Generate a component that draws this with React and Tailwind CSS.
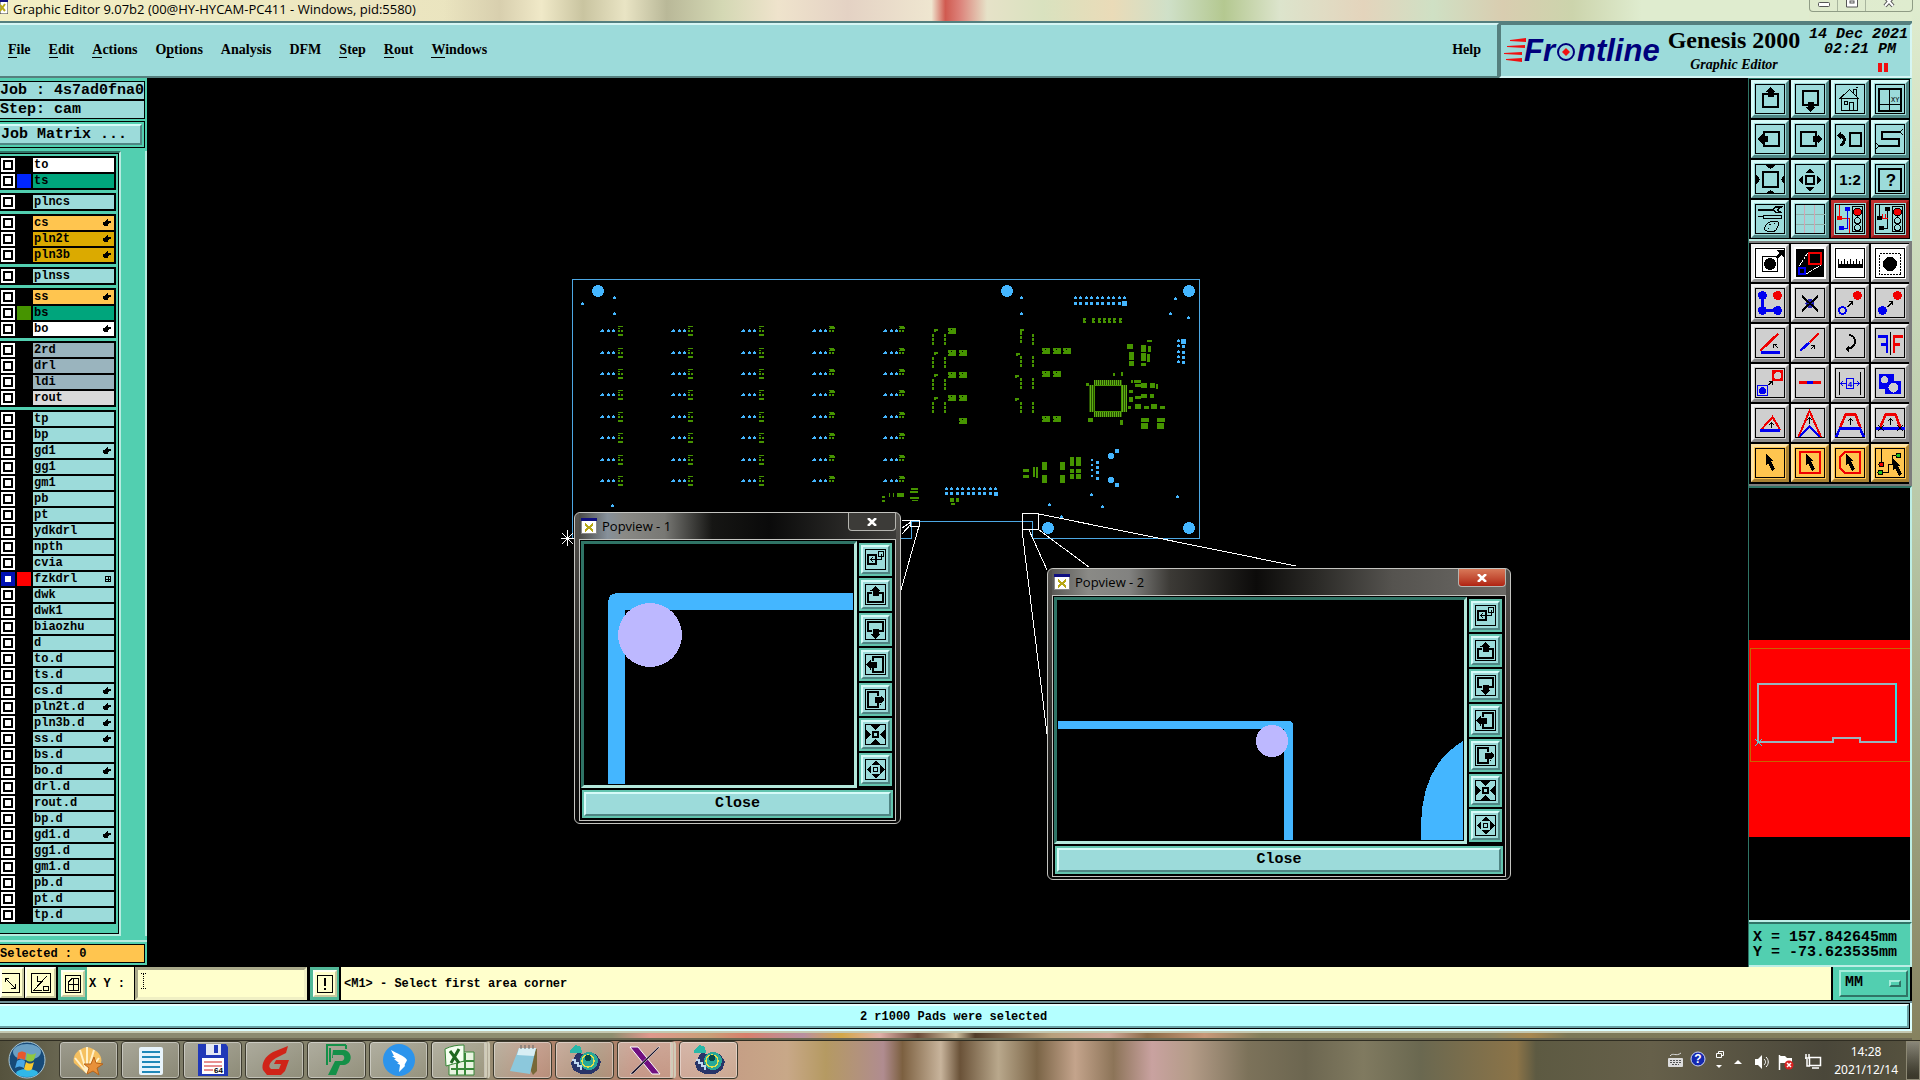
import React from 'react'

const raised = "border-t-[#d6fbf8] border-l-[#d6fbf8] border-b-[#4f8583] border-r-[#4f8583]";

// layer list, one array per block
const layerGroups = [
  [
    { name: "to", bg: "bg-white" },
    { name: "ts", bg: "bg-[#00a57c]", swatch: "bg-[#0026ff]" },
  ],
  [{ name: "plncs" }],
  [
    { name: "cs", bg: "bg-[#ffc54f]", hand: true },
    { name: "pln2t", bg: "bg-[#dbaa00]", hand: true },
    { name: "pln3b", bg: "bg-[#dbaa00]", hand: true },
  ],
  [{ name: "plnss" }],
  [
    { name: "ss", bg: "bg-[#ffc54f]", hand: true },
    { name: "bs", bg: "bg-[#00a57c]", swatch: "bg-[#469400]" },
    { name: "bo", bg: "bg-white", hand: true },
  ],
  [
    { name: "2rd", bg: "bg-[#9ab4be]" },
    { name: "drl", bg: "bg-[#9ab4be]" },
    { name: "ldi", bg: "bg-[#9ab4be]" },
    { name: "rout", bg: "bg-[#dadada]" },
  ],
  [
    { name: "tp" }, { name: "bp" }, { name: "gd1", hand: true }, { name: "gg1" },
    { name: "gm1" }, { name: "pb" }, { name: "pt" }, { name: "ydkdrl" },
    { name: "npth" }, { name: "cvia" },
    { name: "fzkdrl", swatch: "bg-[#ff0000]", active: true },
    { name: "dwk" }, { name: "dwk1" }, { name: "biaozhu" }, { name: "d" },
    { name: "to.d" }, { name: "ts.d" }, { name: "cs.d", hand: true },
    { name: "pln2t.d", hand: true }, { name: "pln3b.d", hand: true },
    { name: "ss.d", hand: true }, { name: "bs.d" }, { name: "bo.d", hand: true },
    { name: "drl.d" }, { name: "rout.d" }, { name: "bp.d" },
    { name: "gd1.d", hand: true }, { name: "gg1.d" }, { name: "gm1.d" },
    { name: "pb.d" }, { name: "pt.d" }, { name: "tp.d" },
  ],
];

const menus = [
  ["", "F", "ile"],
  ["", "E", "dit"],
  ["", "A", "ctions"],
  ["O", "p", "tions"],
  ["Analysis", "", ""],
  ["DFM", "", ""],
  ["", "S", "tep"],
  ["", "R", "out"],
  ["", "W", "indows"],
];

/* ---------- tool icons, all on a 38 x 38 grid ---------- */
const K = "#000";
const B = "#0000f0";
const R = "#f00000";

const SmallArrow = ({ d, head }) => (
  <g stroke={K} fill="none"><path d={d} /><path d={head} /></g>
);

const Lights = () => (
  <g stroke={K} fill="none">
    <rect x="21.5" y="6.5" width="10" height="25" />
    <circle cx="26.5" cy="12" r="4" fill={R} />
    <circle cx="26.5" cy="20.5" r="3" />
    <circle cx="26.5" cy="27.5" r="3" />
  </g>
);

const Cursor = ({ x = 0, y = 0 }) => (
  <path transform={`translate(${x} ${y})`} d="M15 10l8 7h-3l4 8-3 2-4-8-2 3z" fill={K} />
);

const viewTools = [
  { label: "Pan up", icon: <><rect x="12" y="14" width="15" height="13" stroke={K} strokeWidth="2" fill="none" /><path d="M19.5 7l5 5h-2v5h-6v-5h-2z" /></> },
  { label: "Pan down", icon: <><rect x="12" y="11" width="15" height="14" stroke={K} strokeWidth="2" fill="none" /><path d="M19.5 32l5-5h-2v-5h-6v5h-2z" /></> },
  { label: "Home", icon: <g stroke={K} fill="none"><path d="M9 18.5L18.5 9.5l9 9zM10.5 18.5v12h16v-12M18.5 30.5v-8h4v8M13.5 21.5h3v3h-3zM22.5 13v-4h3v7M24.5 7.5h2v-1" /></g> },
  { label: "Coordinates", icon: <><path d="M8 8.5h22v22H8z" stroke={K} strokeWidth="2" fill="none" /><path d="M18.5 8v22M8 24.5h22" stroke={K} /><text x="20" y="22" fontSize="7" fontFamily="Liberation Mono, monospace">XY</text></> },
  { label: "Pan left", icon: <><rect x="13" y="12" width="15" height="14" stroke={K} strokeWidth="2" fill="none" /><path d="M6.5 19l5-5v2h5v6h-5v2z" /></> },
  { label: "Pan right", icon: <><rect x="10" y="12" width="15" height="14" stroke={K} strokeWidth="2" fill="none" /><path d="M31.5 19l-5-5v2h-5v6h5v2z" /></> },
  { label: "Previous view", icon: <><rect x="19" y="13" width="11" height="13" stroke={K} strokeWidth="2" fill="none" /><path d="M6 15l4-4v3h2c4 2 4 10-1 12H9v-2c3-1 4-5 1-6v2z" /></> },
  { label: "Serpentine", icon: <><path d="M29 12H11v7h17v7H8" stroke={K} strokeWidth="2" fill="none" /><path d="M29 12l3-3M29 12l3 3M8 26l-3-3M8 26l-3 3" stroke={K} /></> },
  { label: "Zoom in", icon: <><rect x="12" y="12" width="15" height="15" stroke={K} strokeWidth="2" fill="none" /><path d="M14 5h11l-5.500 4zM14 34h11l-5.500-4zM5 14v11l4-5.500zM34 14v11l-4-5.500z" /></> },
  { label: "Zoom out", icon: <><rect x="15" y="16" width="8" height="8" stroke={K} strokeWidth="2" fill="none" /><path d="M14 13h10l-5-4zM14 27h10l-5 4zM12 15v10l-4-5zM26 15v10l4-5z" /></> },
  { label: "Zoom 1:2", icon: <text x="19" y="25" textAnchor="middle" fontSize="15" fontWeight="bold" fontFamily="Liberation Sans, sans-serif">1:2</text> },
  { label: "Query", icon: <><path d="M8 8.5h22v22H8z" stroke={K} strokeWidth="2" fill="none" /><text x="20" y="26" textAnchor="middle" fontSize="17" fontWeight="bold" fontFamily="Liberation Sans, sans-serif">?</text></> },
  { label: "Preferences", icon: <g stroke={K} fill="none"><path d="M7 9.5h15M7 10.5h15" /><path d="M30 7h-5l-3 2.500 3 3h5l-3-2v-1z" strokeWidth="1.5" /><path d="M7 16.5h5M12 15h18v3H12zM14 27c2-6 13-8 14-3 0 2-2 3-3 6-3 3-8 2-11 0-1-1 0-2 0-3zM18 24h2M23 23h1M17 28h1" /></g> },
  { label: "Grid", icon: <g fill="none"><path d="M4.5 24.5h29M4.5 14.5h29" stroke="#8fb0a8" /><path d="M13.5 5v28M23.5 5v28" stroke="#d3a5b5" /></g> },
  { label: "Net compare", red: true, icon: <><path d="M8.5 5v13h10v15" stroke={R} fill="none" /><path d="M16.5 9v19h-6" stroke={B} fill="none" /><circle cx="8.5" cy="18" r="2.5" fill={R} /><circle cx="16.5" cy="9" r="2.5" fill={B} /><circle cx="10.5" cy="28" r="2.5" fill={B} /><Lights /></> },
  { label: "Net errors", red: true, icon: <><path d="M8.5 5v13M16.5 9v19h-6M8 18h3" stroke={K} fill="none" /><path d="M11.5 14v4h5M14.5 14v4" stroke={R} fill="none" /><circle cx="8.5" cy="18" r="2.5" /><circle cx="16.5" cy="9" r="2.5" /><circle cx="10.5" cy="28" r="2.5" /><Lights /></> },
];

const arrowNE = <SmallArrow d="M16.5 23l5-5" head="M18 17.5h3.500V21" />;

const editTools = [
  { label: "Select feature", tone: "white", icon: <><rect x="11.5" y="12.5" width="15" height="15" stroke={K} fill="none" /><circle cx="19" cy="20" r="6" /><path d="M24 13l4-4-3-3h8v8l-3-3-4 4z" /></> },
  { label: "Popview", tone: "white", dark: true, icon: <><path d="M8.5 22l8-13M15 30l15-9" stroke="#fff" strokeDasharray="3 1" /><rect x="18" y="9" width="12" height="11" stroke={R} strokeWidth="2" fill="none" /><rect x="8" y="24" width="6" height="6" stroke={B} strokeWidth="2" fill="none" /></> },
  { label: "Measure", tone: "white", icon: <><path d="M7 20h25v4H7z" /><path d="M7.5 15v5M10.5 17v3M13.5 15v5M16.5 17v3M19.5 15v5M22.5 17v3M25.5 15v5M28.5 17v3M31.5 15v5" stroke={K} /></> },
  { label: "Area select", tone: "white", icon: <><rect x="8.5" y="9.5" width="21" height="21" stroke={K} fill="none" strokeDasharray="2 1" /><circle cx="19" cy="20" r="7" /></> },

  { label: "Connect", icon: <><path d="M11.5 12v14.500H27" stroke={B} strokeWidth="3" fill="none" /><circle cx="11.5" cy="11.5" r="4.5" fill={B} /><circle cx="11.5" cy="26.5" r="4.5" fill={B} /><circle cx="26.5" cy="26.5" r="4.5" fill={B} /><circle cx="26.5" cy="11.5" r="4.5" fill={R} /></> },
  { label: "Delete", icon: <><circle cx="19" cy="19.5" r="4.5" fill="#2020b0" /><path d="M11 12l16 15M27 12L11 27" stroke={K} strokeWidth="2" /></> },
  { label: "Move", icon: <><circle cx="11.5" cy="26.5" r="3.5" stroke={B} strokeWidth="2" fill="none" /><circle cx="26.5" cy="11.5" r="4.5" fill={R} />{arrowNE}</> },
  { label: "Copy", icon: <><circle cx="11.5" cy="26.5" r="4.5" fill={B} /><circle cx="26.5" cy="11.5" r="4.5" fill={R} />{arrowNE}</> },

  { label: "Rotate", icon: <><path d="M27.5 9.5l-18 17" stroke={R} strokeWidth="2.5" /><path d="M10 28.5h19" stroke={B} strokeWidth="2.5" /><SmallArrow d="M27 24l-4-4" head="M26 20.5h-3.500V24" /></> },
  { label: "Slope", icon: <><path d="M27.5 9.5L18.5 18.5" stroke={R} strokeWidth="2.5" /><path d="M18.5 18.5l-9 8" stroke={B} strokeWidth="2.5" /><SmallArrow d="M19.5 25.5l4-4" head="M20 21.5h3.500V25" /></> },
  { label: "Undo", icon: <><path d="M18 11c8 1 9 12-2 14" stroke={K} strokeWidth="2" fill="none" /><path d="M14 25l4-4v7z" /></> },
  { label: "Mirror", icon: <><path d="M7 12.5h9v16M10 20.5h6" stroke={B} strokeWidth="2.5" fill="none" /><path d="M19.5 8v23" stroke={K} /><path d="M32 12.5h-9v16M23 20.5h6" stroke={R} strokeWidth="2.5" fill="none" /></> },

  { label: "Change symbol", icon: <><rect x="6.5" y="21.5" width="10" height="10" stroke={B} fill="none" /><circle cx="11.5" cy="26.5" r="3.5" fill={B} /><rect x="21" y="6" width="11" height="11" fill={R} /><circle cx="26.5" cy="11.5" r="3.5" fill="#cfcfcf" /><SmallArrow d="M17.5 21l3-3" head="M18 17.5h3V21" /></> },
  { label: "Merge lines", icon: <><path d="M8 18.5h22" stroke={R} strokeWidth="3" /><path d="M16 18.5h6" stroke={B} strokeWidth="3" /></> },
  { label: "Spacing", icon: <><path d="M8.5 8v23M29.5 8v23" stroke={K} /><path d="M9 19.5h20M12 17l-2.500 2.500L12 22M26 17l2.500 2.500L26 22" stroke={B} fill="none" /><rect x="15.5" y="14.5" width="7" height="10" fill="#cfcfcf" stroke={B} /><text x="19" y="23" textAnchor="middle" fontSize="8" fontWeight="bold" fill={B} fontFamily="Liberation Mono, monospace">4</text></> },
  { label: "Polarity", icon: <><path d="M8 10h15v7h7v13H14v-5H8z" fill={B} /><circle cx="13.5" cy="15.5" r="3.5" fill="#cfcfcf" /><circle cx="22.5" cy="23.5" r="5" fill="#cfcfcf" /></> },

  { label: "Triangle", icon: <><path d="M9.5 26.5L21.5 13l8 13.500" stroke={R} strokeWidth="2" fill="none" /><path d="M9 26.5h20" stroke={B} strokeWidth="2.5" /><SmallArrow d="M20.5 24v-5" head="M18 21l2.500-2.500L23 21" /></> },
  { label: "Sharp corner", icon: <><path d="M7.5 33L18.5 7l11.500 26" stroke={R} strokeWidth="2" fill="none" /><path d="M8.5 33l10-10.500L29 33" stroke={B} strokeWidth="2" fill="none" /><SmallArrow d="M18.5 20v-6" head="M16 16l2.500-2.500L21 16" /></> },
  { label: "Trapezoid", icon: <><path d="M9 24l5.500-13.500h10L29.500 24" stroke={R} strokeWidth="2.5" fill="none" /><path d="M5 33l4-8.500h20l4 8.500" stroke={B} strokeWidth="2.5" fill="none" /><SmallArrow d="M19.5 21v-6" head="M17 17l2.500-2.500L22 17" /></> },
  { label: "Trapezoid cut", icon: <><path d="M9 24l5.500-13.500h10L29.500 24" stroke={R} strokeWidth="2.5" fill="none" /><path d="M5 24.5h29" stroke={B} strokeWidth="2.5" /><path d="M7 21l6 6M13 21l-6 6M26 21l6 6M32 21l-6 6" stroke={K} /><SmallArrow d="M19.5 21v-6" head="M17 17l2.500-2.500L22 17" /></> },

  { label: "Pick", tone: "orange", icon: <Cursor /> },
  { label: "Pick in rectangle", tone: "orange", icon: <><rect x="9" y="8" width="20" height="21" stroke={R} strokeWidth="2" fill="none" /><Cursor /></> },
  { label: "Pick in polygon", tone: "orange", icon: <><path d="M14 8h15v21H14l-5-5V13z" stroke={R} strokeWidth="2" fill="none" /><Cursor /></> },
  { label: "Pick net", tone: "orange", icon: <><path d="M10.5 5v15M10 28.5h7v-8h4v-9h6" stroke={K} fill="none" /><circle cx="10.5" cy="20.5" r="2.5" fill={R} stroke={K} /><circle cx="9.5" cy="28.5" r="2.5" fill="#20c020" stroke={K} /><circle cx="27.5" cy="11.5" r="2.5" fill="#20c020" stroke={K} /><Cursor x={7} y={5} /></> },
];

/* popview side icons, 33 x 33 grid */
const popTools = [
  { label: "Attach view", icon: <><rect x="9" y="12" width="8" height="9" stroke={K} strokeWidth="2" fill="none" /><path d="M19.5 8.5h5v5h-5zM22.5 11v5.500h-11M14 14l-2.500 2.500L14 19" stroke={K} fill="none" /></> },
  { label: "Pan up", icon: <><path d="M13 15H9v9h15v-9h-4" stroke={K} strokeWidth="2" fill="none" /><path d="M16.5 8l5 4.500h-2V18h-6v-5.500h-2z" /></> },
  { label: "Pan down", icon: <><path d="M13 18H9V9h15v9h-4" stroke={K} strokeWidth="2" fill="none" /><path d="M16.5 26l5-5h-2v-5h-6v5h-2z" /></> },
  { label: "Pan left", icon: <><path d="M14 13V9h10v15H14v-4" stroke={K} strokeWidth="2" fill="none" /><path d="M7.5 16.5l4-5v2h6v6h-6v2z" /></> },
  { label: "Pan right", icon: <><path d="M19 13V9H9v15h10v-4" stroke={K} strokeWidth="2" fill="none" /><path d="M25.5 16.5l-4-5v2h-6v6h6v2z" /></> },
  { label: "Zoom in", icon: <><rect x="14" y="14" width="5" height="5" stroke={K} strokeWidth="2" fill="none" /><path d="M11 7h11l-5.500 5zM11 26h11l-5.500-5zM7 11v11l5-5.500zM26 11v11l-5-5.500z" /></> },
  { label: "Zoom out", icon: <><rect x="14.5" y="14.5" width="4" height="4" stroke={K} fill="none" /><path d="M12 12h9l-4.500-4.500zM12 21h9l-4.500 4.500zM12 12v9l-4.500-4.500zM21 12v9l4.500-4.500z" /></> },
];

const ToolButton = ({ tool }) => {
  let look = "bg-[#9cdbda] " + raised;
  if (tool.red) look = "bg-[#9cdbda] border-t-[#c03030] border-l-[#c03030] border-b-[#8a1414] border-r-[#8a1414]";
  if (tool.group === "edit") {
    look = "bg-[#cfcfcf] border-t-[#f2f2f2] border-l-[#f2f2f2] border-b-[#8c8c8c] border-r-[#8c8c8c]";
  }
  if (tool.tone === "white") look = "bg-white border-t-[#f2f2f2] border-l-[#f2f2f2] border-b-[#9a9a9a] border-r-[#9a9a9a]";
  if (tool.tone === "orange") look = "bg-[#ffc54f] border-t-[#ffe3a2] border-l-[#ffe3a2] border-b-[#a98132] border-r-[#a98132]";
  return (
    <button type="button" aria-label={tool.label} className={"relative h-[38px] w-[38px] border-3 " + look}>
      <svg viewBox="0 0 38 38" className="absolute -left-[3px] -top-[3px] h-[38px] w-[38px]" shapeRendering="crispEdges">
        <rect x="4.5" y="4.5" width="29" height="29" fill={tool.dark ? "#000" : "none"} stroke={tool.dark ? "#fff" : "#000"} />
        {tool.icon}
      </svg>
    </button>
  );
};

const Hand = () => (
  <svg viewBox="0 0 8 8" className="h-2 w-2" shapeRendering="crispEdges">
    <path d="M4 0h1v2h3v2H6v1H5v2H1V6H0V3h2V2h1V1h1z" />
  </svg>
);

const LayerRow = ({ layer }) => (
  <div className="mb-[2px] flex h-[14px] bg-black">
    <input
      type="checkbox"
      id={"layer-" + layer.name}
      className={layer.active
        ? "ml-px h-[14px] w-[14px] appearance-none border-4 border-[#0010b4] bg-white"
        : "ml-px h-[14px] w-[14px] appearance-none border-2 border-white bg-white shadow-[inset_0_0_0_2px_#000]"}
    />
    <span className={"ml-[2px] h-[14px] w-[14px] " + (layer.swatch || "bg-black")}></span>
    <label
      htmlFor={"layer-" + layer.name}
      className={"ml-[2px] mr-[2px] flex flex-1 items-center justify-between pl-px pr-[3px] text-[12px] leading-[14px] " + (layer.bg || "bg-[#9cdbda]")}
    >
      {layer.name}
      {layer.hand && <Hand />}
      {layer.active && (
        <svg viewBox="0 0 6 6" className="h-[6px] w-[6px]" shapeRendering="crispEdges">
          <path d="M.5.5h5v5h-5zM3 0v6M0 3h6" stroke="#000" fill="none" />
        </svg>
      )}
    </label>
  </div>
);

const LeftPanel = () => (
  <aside className="flex w-[147px] shrink-0 flex-col bg-[#52cfb0] font-bold">
    <div className="flex flex-col pr-[2px] pt-[3px] text-[15px]">
      <div className="h-[19px] whitespace-nowrap border border-l-0 border-black bg-[#9cdbda] leading-[18px]">Job : 4s7ad0fna0</div>
      <div className="h-[19px] border border-l-0 border-black bg-[#9cdbda] leading-[18px]">Step: cam</div>
      <div className="mt-[2px] border border-l-0 border-black py-[2px] pr-[2px]">
        <button type="button" className={"block h-[21px] w-full border-2 border-l-0 bg-[#9cdbda] pl-px text-left leading-[18px] " + raised}>Job Matrix ...</button>
      </div>
    </div>
    <div className="mt-[3px] flex flex-1 border-r-2 border-[#b6ece0]">
      <div className="w-[121px] border-b-2 border-r-2 border-b-[#b6ece0] border-r-[#b6ece0] border-t-2 border-t-[#2f7466]">
        <div className="h-full border-b border-r border-t border-black pr-[2px] pt-[2px]">
          {layerGroups.map((group, i) => (
            <div key={i} className="mb-[3px] flow-root bg-black pt-[2px]">
              {group.map((layer) => <LayerRow key={layer.name} layer={layer} />)}
            </div>
          ))}
        </div>
      </div>
    </div>
    <div className="mt-1 border-t-2 border-[#b6ece0] pb-[2px] pr-[2px] pt-[2px]">
      <div className="h-[19px] border border-l-0 border-black bg-[#ffc54f] text-[12px] leading-[18px]">Selected : 0</div>
    </div>
    <div className="h-[2px] bg-black"></div>
  </aside>
);

/* ---------- board drawing ---------- */
const rowYs = [331, 353, 374, 395, 417, 438, 460, 481];
const padCols = [
  { x: 602, g: 618 },
  { x: 673, g: 688 },
  { x: 743, g: 759 },
  { x: 814, g: 829 },
  { x: 885, g: 899 },
];
const bigHoles = [[598, 291], [1007, 291], [1189, 291], [1048, 528], [1189, 528]];
const vias = [
  [582, 304], [614, 298], [614, 314], [612, 506], [1021, 298], [1021, 314], [1175, 299],
  [1170, 314], [1188, 318], [1091, 495], [1102, 507], [1049, 505], [1061, 517], [1177, 497],
];
const chips = [
  [948, 328], [948, 350], [959, 350], [948, 372], [959, 372], [948, 395], [959, 395], [959, 418],
  [1042, 348], [1053, 348], [1063, 348], [1042, 371], [1053, 371], [1042, 416], [1053, 416],
];
const strips = [
  [933, 334], [933, 357], [933, 379], [933, 402], [945, 334], [945, 357], [945, 379], [945, 402],
  [1021, 332], [1021, 356], [1021, 378], [1021, 402], [1033, 334], [1033, 356], [1033, 378], [1033, 402],
];
const caps = [
  [934, 329], [934, 352], [934, 374], [934, 397], [1020, 329], [1016, 353], [1015, 375], [1015, 398],
];
const blocks = [
  [1127, 344, 6, 5], [1129, 352, 5, 8], [1129, 361, 5, 5], [1141, 345, 5, 7], [1141, 353, 5, 8], [1141, 363, 5, 3],
  [1147, 340, 5, 2], [1148, 346, 3, 6], [1147, 354, 3, 8], [1134, 380, 7, 3], [1135, 384, 6, 3], [1141, 383, 6, 5],
  [1150, 383, 5, 5], [1156, 384, 2, 5], [1141, 394, 6, 4], [1150, 394, 4, 4], [1135, 396, 6, 3], [1135, 404, 6, 5],
  [1144, 406, 5, 3], [1151, 404, 6, 5], [1160, 406, 5, 3], [1141, 418, 8, 4], [1157, 418, 8, 4], [1141, 423, 7, 6],
  [1157, 423, 7, 6], [1129, 390, 4, 3], [1129, 397, 4, 5], [1128, 406, 3, 3], [1131, 380, 2, 3],
  [1086, 383, 3, 3], [1088, 418, 5, 4], [1120, 420, 3, 5], [1113, 373, 2, 3], [1121, 372, 2, 4],
  [1023, 469, 6, 3], [1023, 475, 6, 3], [1033, 467, 2, 10], [1036, 467, 2, 11], [1042, 462, 5, 8], [1042, 475, 5, 8],
  [1060, 462, 5, 8], [1060, 475, 5, 8], [1070, 457, 4, 9], [1076, 457, 5, 9], [1070, 469, 4, 4], [1076, 469, 5, 4],
  [1070, 474, 4, 5], [1076, 474, 5, 5], [950, 498, 4, 4], [956, 498, 3, 4], [951, 503, 4, 2],
  [911, 488, 7, 2], [910, 491, 8, 2], [910, 497, 9, 2], [912, 500, 6, 1], [882, 496, 3, 2], [882, 500, 3, 2],
  [889, 493, 1, 4], [893, 493, 1, 4], [897, 493, 7, 4],
];
const resistors = [1083, 1092, 1098, 1103, 1108, 1113, 1119];
const ten = [0, 1, 2, 3, 4, 5, 6, 7, 8, 9];

const Via = ({ x, y }) => <path d={`M${x - 1} ${y + 1}v-2h1v-1h1v1h1v2z`} />;

const Board = () => (
  <svg className="absolute inset-0 h-full w-full" shapeRendering="crispEdges">
    <defs>
      <pattern id="pins" width="2" height="2" patternUnits="userSpaceOnUse">
        <rect width="2" height="2" fill="#264f00" />
        <rect width="1" height="2" fill="#5fae14" />
      </pattern>
    </defs>
    <g transform="translate(-147 -78)">
      <path d="M572.5 538.5V279.5H1199.5V538.5H1032.500V521.500H911v17H572.500" fill="none" stroke="#4da8e4" />
      <g fill="#44b6ff">
        {bigHoles.map(([x, y]) => <circle key={x + "-" + y} cx={x} cy={y} r="6" />)}
        {vias.map(([x, y]) => <Via key={x + "-" + y} x={x} y={y} />)}
        {padCols.map((c) => rowYs.map((y) => (
          <g key={c.x + "-" + y}>
            <Via x={c.x} y={y} /><Via x={c.x + 6} y={y} /><Via x={c.x + 11} y={y} />
            <path d={`M${c.x - 2} ${y}h4v1h-4z`} />
          </g>
        )))}
        {ten.map((i) => (
          <g key={i}>
            <Via x={1075 + Math.round(i * 5.45)} y={298} />
            <rect x={1074 + Math.round(i * 5.45)} y="302" width="3" height="3" />
            <Via x={946 + Math.round(i * 5.45)} y={489} />
            <rect x={945 + Math.round(i * 5.45)} y="492" width="3" height="3" />
          </g>
        ))}
        <rect x="1122" y="301" width="5" height="5" />
        <rect x="994" y="492" width="4" height="4" />
        {[341, 346, 352, 357, 362].map((y) => (
          <g key={y}><Via x={1178} y={y} /><rect x="1182" y={y - 1} width="3" height="3" /></g>
        ))}
        <rect x="1181" y="339" width="5" height="5" />
        {[459, 464, 469, 475].map((y) => (
          <g key={y}><rect x="1091" y={y} width="2" height="2" /><rect x="1096" y={y + 2} width="3" height="3" /></g>
        ))}
        <circle cx="1111" cy="456" r="3" /><circle cx="1117" cy="451" r="2.5" />
        <circle cx="1111" cy="480" r="3" /><circle cx="1117" cy="485" r="2.5" />
      </g>
      <g fill="#469400">
        {padCols.map((c, ci) => rowYs.map((y) => (
          <g key={c.g + "-" + y}>
            <path d={`M${c.g} ${y - 5}h5v1h-5zM${c.g} ${y - 3}h2v1h-2z`} />
            <path d={`M${c.g} ${y - 1}h2v2h-2zM${c.g + 3} ${y - 1}h2v2h-2z`} />
            {ci < 3 && <path d={`M${c.g} ${y + 3}h5v2h-5z`} />}
            {ci > 2 && <path d={`M${c.g + 1} ${y - 4}h5v2h-5z`} />}
          </g>
        )))}
        {chips.map(([x, y]) => <path key={x + "-" + y} d={`M${x} ${y}h8v6h-8v-2h1v-1h-1zM${x + 3} ${y + 1}v1h1v-1z`} fillRule="evenodd" />)}
        {strips.map(([x, y]) => <path key={x + "-" + y} d={`M${x} ${y}v12`} stroke="#469400" strokeWidth="2" strokeDasharray="3 1" />)}
        {caps.map(([x, y]) => <path key={x + "-" + y} d={`M${x} ${y}h4v2h-2v1h-2z`} />)}
        {resistors.map((x) => <path key={x} d={`M${x} 318h3v2h-1v1h1v2h-3z`} />)}
        {blocks.map(([x, y, w, h]) => <rect key={x + "-" + y} x={x} y={y} width={w} height={h} />)}
      </g>
      <path fill="url(#pins)" fillRule="evenodd" d="M1094 380h28v5h5v27h-5v5h-28v-5h-5v-27h5zM1094 385v27h28v-27z" />
      <path d="M1094.5 385.5h27v26h-27z" fill="none" stroke="#469400" />
      {/* leader lines to the popviews */}
      <g stroke="#fff" fill="none">
        <path d="M1022.5 513.5h16v16h-16zM1039 514l257 52M1039 530l50 37M1029 530l18 40M1022 530l25 204" />
        <path d="M902 520.5h17v6h-9v-6M919 526l-18 64M902 528l9-6M902 534l9-10" />
        <path d="M567.5 530v16M561 538.5h13M562 533l11 11M573 533l-11 11" />
      </g>
    </g>
  </svg>
);

const PopIcon = () => (
  <svg viewBox="0 0 16 16" className="h-4 w-4" shapeRendering="crispEdges">
    <path d="M.5.5h15v15H.5z" fill="#fff" stroke="#888" />
    <path d="M0 0h16v3H0z" fill="#101080" />
    <path d="M4 6l8 7M12 6l-8 7" stroke="#b8a818" strokeWidth="2" />
  </svg>
);

const Popview = ({ title, place, headLook, closeLook, children }) => (
  <section className={"absolute flex h-[312px] flex-col rounded-md border border-[#c4c4c0] bg-linear-to-b from-[#55534f] via-[#2c2b28] to-[#080808] px-1 pb-1 " + place}>
    <header className={"flex h-[26px] shrink-0 justify-between pl-[2px] " + headLook}>
      <div className="flex items-center gap-[5px]">
        <PopIcon />
        <h2 className="font-['Open_Sans','Noto_Sans',sans-serif] text-[13px] leading-[18px] text-black">{title}</h2>
      </div>
      <button type="button" aria-label="Close window" className={"flex h-[18px] w-12 items-center justify-center rounded-b border border-t-0 border-[#b5b5b0] " + closeLook}>
        <svg viewBox="0 0 10 8" className="h-2 w-[10px]"><path d="M1 0l8 8M9 0L1 8" stroke="#fff" strokeWidth="2.5" /></svg>
      </button>
    </header>
    <div className="flex flex-1 flex-col border border-[#c4c4c0] bg-black p-px">
      <div className="flex flex-1 gap-[2px]">
        <div className="flex-1 border-3 border-b-[#b4e8dc] border-l-[#2f7466] border-r-[#b4e8dc] border-t-[#2f7466] bg-black">
          {children}
        </div>
        <div className="mr-[2px] flex flex-col gap-[2px] pt-[2px]">
          {popTools.map((t) => (
            <button key={t.label} type="button" aria-label={t.label} className="h-[33px] w-[33px] bg-[#62c4ae] p-[2px]">
              <span className={"relative block h-[29px] w-[29px] border-2 bg-[#9cdbda] " + raised}>
                <svg viewBox="0 0 33 33" className="absolute -left-1 -top-1 h-[33px] w-[33px]" shapeRendering="crispEdges">
                  <rect x="6.5" y="6.5" width="20" height="20" stroke="#000" fill="none" />
                  {t.icon}
                </svg>
              </span>
            </button>
          ))}
        </div>
      </div>
      <div className="mx-px mb-px mt-[2px] bg-[#62c4ae] p-[2px]">
        <button type="button" className={"block h-6 w-full border-2 bg-[#9cdbda] text-[15px] leading-[18px] font-bold " + raised}>Close</button>
      </div>
    </div>
  </section>
);

const RightPanel = () => (
  <aside className="flex w-[164px] shrink-0 flex-col border-l border-[#2f7466] bg-black">
    <div className="border-r-2 border-t border-[#bdeee6] border-t-[#2f7466] bg-black pb-px pl-[2px] pt-px">
      <div className="grid grid-cols-[repeat(4,38px)] gap-[2px]">
        {viewTools.map((t) => <ToolButton key={t.label} tool={t} />)}
      </div>
    </div>
    <div className="h-[2px] bg-[#bdeee6]"></div>
    <div className="border-3 border-b-2 border-l-0 border-t-2 border-[#7c7c7c] bg-black pb-[2px] pl-[2px] pt-px">
      <div className="grid grid-cols-[repeat(4,38px)] gap-[2px]">
        {editTools.map((t) => <ToolButton key={t.label} tool={{ ...t, group: "edit" }} />)}
      </div>
    </div>
    {/* overview */}
    <div className="flex flex-1 flex-col border-b-2 border-r-2 border-t-2 border-b-[#bdeee6] border-r-[#bdeee6] border-t-[#2f7466]">
      <div className="flex-[151]"></div>
      <svg viewBox="0 0 161 197" className="w-full" shapeRendering="crispEdges">
        <path d="M0 0h161v197H0z" fill="#ff0000" />
        <path d="M161 8.5H1.5v113H161" stroke="#c86400" fill="none" />
        <path d="M9 44h138v58h-36v-4H84v4H9z" stroke="#9ab4be" strokeWidth="2" fill="none" />
        <path d="M147 43v60" stroke="#30e0e8" strokeWidth="2" />
        <path d="M6 99l7 7M13 99l-7 7" stroke="#40d0d8" />
      </svg>
      <div className="flex-[83]"></div>
    </div>
    <div className="h-[45px] border-b-2 border-r-2 border-t-2 border-b-[#bdeee6] border-r-[#bdeee6] border-t-[#2f7466] bg-[#52cfb0] pl-1 pt-[6px] text-[15px] leading-[15px] font-bold whitespace-pre">
      <p>X = 157.842645mm</p>
      <p>Y = -73.623535mm</p>
    </div>
  </aside>
);

const Logo = () => (
  <svg viewBox="0 0 160 34" className="h-[34px] w-[160px]">
    <path d="M6 7l16-2v4L6 8zM3 13l18-1v3L3 14zM0 20l18-1v3L0 21zM2 26l16-1v4L2 27z" fill="#f01010" />
    <g fontFamily="Liberation Sans, Arial, sans-serif" fontSize="31" fontWeight="bold" fontStyle="italic" fill="#00007c">
      <text x="20" y="28">Fr</text>
      <text x="73" y="28">ntline</text>
    </g>
    <circle cx="62" cy="19" r="8" fill="none" stroke="#00007c" strokeWidth="2" />
    <path d="M62 15l4 4-4 4-4-4z" fill="#f01010" />
  </svg>
);

const HeaderBar = () => (
  <div className="flex h-[57px] shrink-0 border-t-2 border-[#557f7e] bg-[#9cdbda] text-black">
    <nav className="flex flex-1 items-center justify-between border-2 border-l-0 border-b-[#557f7e] border-r-[#557f7e] border-t-[#d6f6f4] pb-[2px] pr-4 font-['Liberation_Serif','Times_New_Roman',serif] text-[14px] font-bold">
      <div className="flex gap-[18px] pl-2">
        {menus.map(([a, u, b]) => (
          <button key={a + u + b} type="button" className="leading-[18px]">
            {a}{u && <span className="border-b border-black">{u}</span>}{b}
          </button>
        ))}
      </div>
      <button type="button">Help</button>
    </nav>
    <div className="flex border-2 border-b-[#d6f6f4] border-l-[#557f7e] border-r-[#d6f6f4] border-t-[#557f7e] pl-[3px] pt-[2px]">
      <div className="pt-[6px]"><Logo /></div>
      <div className="flex w-[140px] flex-col items-center font-['Liberation_Serif','Times_New_Roman',serif] font-bold whitespace-nowrap">
        <h1 className="text-[24px] leading-[26px]">Genesis 2000</h1>
        <p className="text-[14px] leading-[24px] italic">Graphic Editor</p>
      </div>
      <div className="flex w-[106px] flex-col items-end pr-[2px] text-[15px] leading-[15px] font-bold italic whitespace-nowrap">
        <time>14 Dec 2021</time>
        <time className="pr-3">02:21 PM</time>
        <span className="mr-5 mt-[6px] flex h-[9px] gap-[2px]">
          <i className="w-1 bg-[#f01010]"></i><i className="w-1 bg-[#f01010]"></i>
        </span>
      </div>
    </div>
  </div>
);

const TitleBar = () => (
  <header className="flex h-[21px] shrink-0 items-start justify-between bg-linear-to-r from-[#f3efc4] via-[#e6dfbd] via-35% to-[#dfeccf] font-['Open_Sans','Noto_Sans',sans-serif] text-[13px] text-black">
    <div className="flex gap-[5px]">
      <svg viewBox="0 0 8 14" className="h-[14px] w-2"><path d="M0 0h8v14H0z" fill="#fff" stroke="#333" /><path d="M0 0h8v2H0z" fill="#101080" /><path d="M0 11l5-7M0 5l5 6" stroke="#b8a818" strokeWidth="2" /></svg>
      <span className="leading-[18px] whitespace-nowrap">Graphic Editor 9.07b2 (00@HY-HYCAM-PC411 - Windows, pid:5580)</span>
    </div>
    <div className="h-full flex-1 bg-[linear-gradient(90deg,transparent_2%,#d8cfae_6%,#f0e9c8_9%,#c9c4a0_12%,#e9e4c4_15%,#b9b898_18%,#d4d8b4_22%,#efe3cc_26%,#e4d2c4_31%,#efe6d0_37%,#d05a50_38%,#dc8078_39%,#e6e2c8_41%,#d9e2bf_45%,#eadbb8_50%,#cfe0c8_54%,#b4c890_58%,#dce4cc_62%,#e4d4bc_68%,#cfe0c4_73%,#d9cdb0_78%,#ccd4ac_83%,#dfeccf_88%)]"></div>
    <div className="mr-[-1px] flex h-[12px] rounded-b border border-t-0 border-[#8f9c85]">
      <button type="button" aria-label="Minimize" className="flex w-7 justify-center border-r border-[#a9b59e]">
        <svg viewBox="0 0 12 8" className="h-2 w-3"><rect x=".5" y="2.5" width="11" height="4" rx="1" fill="#fff" stroke="#555" /></svg>
      </button>
      <button type="button" aria-label="Restore" className="flex w-7 justify-center border-r border-[#a9b59e]">
        <svg viewBox="0 0 12 8" className="h-2 w-3"><path d="M.5-2h11v9H.5z" fill="#fff" stroke="#555" /><rect x="4" y="1" width="4" height="2" fill="none" stroke="#555" /></svg>
      </button>
      <button type="button" aria-label="Close" className="flex w-[46px] justify-center">
        <svg viewBox="0 0 12 8" className="h-2 w-3"><path d="M2-3l8 9M10-3L2 6" stroke="#555" strokeWidth="4" /><path d="M2-3l8 9M10-3L2 6" stroke="#fff" strokeWidth="2" /></svg>
      </button>
    </div>
  </header>
);

const creamBevel = "border-2 border-t-[#fffff0] border-l-[#fffff0] border-b-[#c9c9a0] border-r-[#c9c9a0] bg-[#ffffcc]";

const CommandBar = () => (
  <div className="flex h-[34px] shrink-0 border-b border-black bg-black text-[12px] font-bold text-black">
    <button type="button" aria-label="Snap off" className={"mr-px flex h-[31px] w-6 items-center " + creamBevel}>
      <svg viewBox="0 0 20 20" className="h-5 w-5" shapeRendering="crispEdges"><path d="M-1 .5h18v19H-1M3 5l10 10M3 9V5h4M9 15h4v-4" stroke="#000" fill="none" /></svg>
    </button>
    <button type="button" aria-label="Relative" className={"mr-[2px] flex h-[31px] w-[31px] items-center justify-center " + creamBevel}>
      <svg viewBox="0 0 20 20" className="h-5 w-5" shapeRendering="crispEdges"><path d="M.5.5h19v19H.5zM2 17.5h9M3 17L16 3M6.500 3v5h3M12 13h5v4h-5z" stroke="#000" fill="none" /></svg>
    </button>
    <span className="flex h-[33px] w-[29px] items-center justify-center bg-[#52b898] p-[2px]">
      <button type="button" aria-label="Grid snap" className={"flex h-[27px] w-6 items-center justify-center " + creamBevel}>
        <svg viewBox="0 0 18 18" className="h-[18px] w-[18px]" shapeRendering="crispEdges"><path d="M1.5.5h15v17h-15zM9 3v12M4 9h11M4.500 15V7l4-4h6v12z" stroke="#000" fill="none" /></svg>
      </button>
    </span>
    <label htmlFor="xy" className="flex w-[47px] items-center whitespace-pre bg-[#ffffcc] pl-[2px]">X Y :</label>
    <div className="relative ml-px w-[172px]">
      <input id="xy" type="text" className="h-[33px] w-full border-3 border-b-[#f0f0c4] border-l-[#a9a98a] border-r-[#f0f0c4] border-t-[#a9a98a] bg-[#ffffcc] px-1" />
      <svg viewBox="0 0 5 16" className="absolute left-[6px] top-[6px] h-4 w-[5px]" shapeRendering="crispEdges"><path d="M0 .5h5M0 15.500h5M2.500 1v14" stroke="#000" strokeDasharray="1 1" /></svg>
    </div>
    <span className="ml-[3px] flex h-[33px] w-[29px] items-center justify-center bg-[#52b898] p-[2px]">
      <button type="button" aria-label="Messages" className={"flex h-[27px] w-6 items-center justify-center " + creamBevel}>
        <svg viewBox="0 0 18 18" className="h-[18px] w-[18px]" shapeRendering="crispEdges"><path d="M1.5.5h15v17h-15z" stroke="#000" fill="none" /><path d="M8 3h2v8H8zM8 13h2v2H8z" /></svg>
      </button>
    </span>
    <p className="ml-[2px] flex flex-1 items-center whitespace-pre bg-[#ffffcc] pl-[3px]">{"<M1> - Select first area corner"}</p>
    <div className="ml-[2px] mr-[2px] flex w-[77px] items-center bg-[#52cfb0] pl-[6px] pr-[2px]">
      <button type="button" className="flex h-[27px] w-full items-center justify-between border-2 border-b-[#2f7466] border-l-[#a5eddb] border-r-[#2f7466] border-t-[#a5eddb] pl-1 pr-[5px] text-[15px]">
        MM
        <span className="h-[7px] w-3 border-2 border-b-[#2f7466] border-l-[#a5eddb] border-r-[#2f7466] border-t-[#a5eddb]"></span>
      </button>
    </div>
  </div>
);

/* ---------- taskbar ---------- */
const Shell = () => (
  <svg viewBox="0 0 32 32" className="h-8 w-8">
    <path d="M14 30L1 19C-1 12 4 5 14 3c10 2 16 9 14 16z" fill="#f5c060" />
    <path d="M14 29L2 14M14 29L7 6M14 29V3M14 29l7-23M14 29l12-15" stroke="#fff0c8" strokeWidth="2" />
    <path d="M21 13l2 6 7 1-6 4 2 7-6-4-6 3 2-6-5-4h7z" fill="#e8913a" stroke="#b86418" />
  </svg>
);
const Doc = () => (
  <svg viewBox="0 0 28 32" className="h-8 w-7">
    <rect x="2" y="3" width="24" height="28" rx="2" fill="#e8f4fc" />
    <path d="M5 8h18M5 13h18M5 18h18M5 23h18M5 28h18" stroke="#2088b8" strokeWidth="2" />
  </svg>
);
const Floppy = () => (
  <svg viewBox="0 0 32 32" className="h-8 w-8">
    <path d="M1 0h28l2 3v29H1z" fill="#2038b8" />
    <path d="M9 0h15v11H9z" fill="#e4e8f4" /><path d="M17 1h4v8h-4z" fill="#2038b8" />
    <path d="M5 14h22v16H5z" fill="#fff" /><path d="M7 18h18M7 22h18M7 26h9" stroke="#d02020" />
    <text x="17" y="29" fontSize="8" fontWeight="bold" fontFamily="Liberation Sans, sans-serif">64</text>
  </svg>
);
const RedG = () => (
  <svg viewBox="0 0 32 32" className="h-8 w-8">
    <path d="M29 2L14 8C6 12 2 20 4 26l4 5h14l4-4 4-11H17l-2 4h7l-2 5h-8c-4-3 0-8 5-11l10-5z" fill="#d02418" />
  </svg>
);
const GreenP = () => (
  <svg viewBox="0 0 32 32" className="h-8 w-8">
    <path d="M25 1H6v20M25 1v4M9 4v14" stroke="#149048" strokeWidth="2" fill="none" />
    <path d="M12 6h11c9 1 9 14 0 15h-4l-4 10H7l7-14h7c3-1 3-6 0-6h-9v3h-1z" fill="#149048" />
  </svg>
);
const Bird = () => (
  <svg viewBox="0 0 32 32" className="h-8 w-8">
    <circle cx="16" cy="16" r="16" fill="#2c94ec" />
    <path d="M8 6c6 4 13 5 16 10-1 3-3 4-2 6l-6 6 1-7-3-2h2l-5-4h2L9 12h2z" fill="#fff" />
  </svg>
);
const Excel = () => (
  <svg viewBox="0 0 32 32" className="h-8 w-8">
    <path d="M12 8h19v23H6V20z" fill="#e8f4e0" stroke="#388838" />
    <path d="M8 25h23M18 17h13M14 18v13M22 9v22" stroke="#388838" strokeWidth="2" />
    <path d="M2 5c6-3 12-4 19-4v16L3 22z" fill="#f4fff0" stroke="#388838" />
    <path d="M7 7l9 12M16 5L8 19" stroke="#206820" strokeWidth="3" />
  </svg>
);
const Note = () => (
  <svg viewBox="0 0 32 32" className="h-8 w-8">
    <path d="M12 4l18 1v22l-4 4z" fill="#786838" />
    <path d="M12 4h17l-6 26-20-3z" fill="#8cc8dc" /><path d="M12 4h17l-2 8-17-1z" fill="#d8eef4" />
    <path d="M14 1v4M18 1v4M22 1v4M26 1v4" stroke="#666" />
  </svg>
);
const Teapot = () => (
  <svg viewBox="0 0 32 32" className="h-8 w-8" shapeRendering="crispEdges">
    <path d="M8 9l8 1 6-2 6 3 4 7-3 8-7 4H12l-8-4-2-7z" fill="#283468" />
    <path d="M1 6l6-5 5 2 1 6H1z" fill="#28b8a8" />
    <ellipse cx="20" cy="17" rx="9" ry="9" fill="#28a898" /><circle cx="19" cy="17" r="6" fill="none" stroke="#e8e048" strokeWidth="1.5" />
    <circle cx="19" cy="14" r="3" fill="#084848" /><path d="M3 16h3v3h3v3h3v4" stroke="#c0d8f0" strokeWidth="2" fill="none" />
  </svg>
);
const BigX = () => (
  <svg viewBox="0 0 32 32" className="h-8 w-8">
    <path d="M1 3h8l22 27h-8z" fill="#701080" stroke="#fff" /><path d="M29 3h2L4 30H1z" fill="#181028" stroke="#fff" strokeWidth=".5" />
  </svg>
);

// stacked = more than one window behind the button
const tasks = [
  { name: "Shell", icon: <Shell /> },
  { name: "Document", icon: <Doc /> },
  { name: "Save", icon: <Floppy /> },
  { name: "Genesis", icon: <RedG /> },
  { name: "Project", icon: <GreenP /> },
  { name: "DingTalk", icon: <Bird /> },
  { name: "Excel", icon: <Excel />, stacked: true },
  { name: "Notes", icon: <Note /> },
  { name: "Graphic Editor", icon: <Teapot /> },
  { name: "X Server", icon: <BigX />, stacked: true },
  { name: "Teapot", icon: <Teapot /> },
];

const Taskbar = () => (
  <footer className="flex h-10 shrink-0 items-start justify-between border-t border-[#2f2d22] bg-[linear-gradient(90deg,#55523d_0%,#7a7863_6%,#8a8770_22%,#8f8b70_25%,#b4826c_28%,#9c8468_31%,#b9806c_33%,#c49a84_37%,#c8a888_41%,#b59a62_43%,#b08c90_46%,#7c6040_47%,#c8b49c_49%,#6a5238_50%,#b9a88c_52%,#7a6446_54%,#c4a48c_56%,#8c7458_58%,#c9a2a0_60%,#b49c88_62%,#7c725a_65%,#6c6650_68%,#807a60_71%,#6a6850_74%,#8c7448_79%,#5d5a42_80%,#66604a_86%,#4a473a_95%,#57533f_100%)] font-['Noto_Sans','Open_Sans',sans-serif] text-[12px] text-white">
    <div className="flex items-center">
      <button type="button" aria-label="Start" className="ml-2 mr-[13px]">
        <svg viewBox="0 0 38 38" className="h-[38px] w-[38px]">
          <circle cx="19" cy="19" r="18" fill="#174a78" stroke="#a8c8d8" />
          <ellipse cx="19" cy="11" rx="14" ry="8" fill="#6aa0c4" />
          <ellipse cx="19" cy="32" rx="11" ry="4" fill="#30b8e8" />
          <path d="M10 12c3-2 5-2 8 0l-1 7c-3-2-6-2-8 0z" fill="#e8582c" />
          <path d="M19 12c3 2 6 2 9 0l-2 7c-3 2-5 2-8 0z" fill="#90c840" />
          <path d="M9 20c3-2 5-2 8 0l-1 7c-3-2-6-2-9 0z" fill="#48a8e8" />
          <path d="M18 21c3 2 5 2 8 0l-2 7c-2 2-5 2-8 0z" fill="#f8c830" />
        </svg>
      </button>
      <div className="flex gap-[3px]">
        {tasks.map((t) => (
          <button
            key={t.name}
            type="button"
            aria-label={t.name}
            className={"flex h-[38px] w-[59px] items-center justify-center rounded border border-[#3d3b2e] bg-linear-to-br from-white/35 to-white/10 shadow-[inset_0_0_0_1px_rgba(255,255,255,0.4)] " + (t.stacked ? "border-r-5 border-double border-r-[#d0ccb8]" : "")}
          >
            {t.icon}
          </button>
        ))}
      </div>
    </div>
    <div className="flex h-full items-center">
      <svg viewBox="0 0 132 24" className="mr-4 h-6 w-[132px]">
        <rect x="0" y="9" width="15" height="9" rx="1" fill="#ddd" /><path d="M2 11.5h11M2 13.5h11M4 15.5h7" stroke="#555" strokeDasharray="2 1" /><path d="M2 7c3-4 6 1 11-3" stroke="#ddd" fill="none" />
        <circle cx="30" cy="10" r="7" fill="#1428b0" stroke="#c8d0f0" /><text x="30" y="14" textAnchor="middle" fontSize="12" fontWeight="bold" fill="#fff" fontFamily="Liberation Sans, sans-serif">?</text>
        <path d="M48.5 4.5h5v4h-5zM50.500 4v-1.500h5v4H54" stroke="#fff" fill="none" /><path d="M48 16h6l-3 3z" fill="#fff" />
        <path d="M66 15h8l-4-4z" fill="#fff" />
        <path d="M87 10h3l4-4v14l-4-4h-3z" fill="#fff" /><path d="M96 10c2 2 2 4 0 6M98 8c3 3 3 7 0 10" stroke="#fff" fill="none" />
        <path d="M111.500 6v15" stroke="#fff" strokeWidth="1.500" /><path d="M112 7h5l2 2h5v6h-5l-2-1h-5z" fill="#fff" /><circle cx="121" cy="16" r="4.500" fill="#d82020" /><path d="M119 14l4 4M123 14l-4 4" stroke="#fff" strokeWidth="1.500" />
      </svg>
      <svg viewBox="0 0 18 18" className="-ml-3 mr-3 h-[18px] w-[18px]"><path d="M5.5 5.5h11v8h-11zM8 16h7M2 2v5M5 2v4M1 6h5M3 7v7h3" stroke="#fff" strokeWidth="1.5" fill="none" /></svg>
      <time className="pr-2 text-center leading-[18px]">14:28<br />2021/12/14</time>
      <button type="button" aria-label="Show desktop" className="h-full w-[14px] border border-[#8c8874] bg-linear-to-b from-white/30 to-black/30"></button>
    </div>
  </footer>
);

const App = () => {
  return (
    <div className="flex min-h-screen flex-col overflow-hidden bg-[#6c6852] font-['Liberation_Mono','Courier_New',monospace] text-black">
      <div className="flex flex-1 flex-col bg-linear-to-b from-[#dfeccf] via-[#b8c8a8] to-[#86825f] pr-2">
        <TitleBar />
        <HeaderBar />
        <div className="flex flex-1">
          <LeftPanel />
          <main className="relative flex-1 overflow-hidden bg-black">
            <Board />
            <Popview
              title="Popview - 1"
              place="left-[427px] top-[434px] w-[327px]"
              headLook="bg-[linear-gradient(90deg,#4a4a48,#86909a_9%,#8a8a86_14%,#787874_27%,#161614_42%,#0a0a0a_60%,#3c3b38)]"
              closeLook="bg-[#3c3b38]"
            >
              <svg viewBox="0 0 270 241" className="h-[241px] w-[270px]" shapeRendering="crispEdges">
                <path d="M24 240V59q0-10 10-10h235v17H41v174z" fill="#44b6ff" />
                <circle cx="66" cy="91" r="32" fill="#bdb8ff" />
              </svg>
            </Popview>
            <Popview
              title="Popview - 2"
              place="left-[900px] top-[490px] w-[464px]"
              headLook="bg-[linear-gradient(90deg,#5a5956,#8a8a86_8%,#828280_17%,#3c3a36_26%,#0c0b0a_45%,#2a2926_58%,#55534f_75%,#6c6a66)]"
              closeLook="bg-linear-to-b from-[#d87858] to-[#b02010]"
            >
              <svg viewBox="0 0 407 241" className="h-[241px] w-[407px]" shapeRendering="crispEdges">
                <path d="M1 121h232l3 2v117h-9V129H1z" fill="#44b6ff" />
                <circle cx="215" cy="141" r="16" fill="#bdb8ff" />
                <path d="M406 141C375 160 362 190 364 240h42z" fill="#44b6ff" />
              </svg>
            </Popview>
          </main>
          <RightPanel />
        </div>
        <CommandBar />
        <div className="h-[30px] shrink-0 border-t-2 border-[#6f8f94] bg-[#dcffff] pb-[2px] pr-[2px]">
          <div className="h-full border-b border-r border-t border-black bg-[#b4ffff]">
            <p role="status" className="h-full border-2 border-l-0 border-b-[#6aa0a4] border-r-[#6aa0a4] border-t-[#e4ffff] text-center text-[12px] leading-[22px] font-bold">2 r1000 Pads were selected</p>
          </div>
        </div>
        <div className="h-[9px] shrink-0 border-b-2 border-t-2 border-b-[#6c6852] border-t-[#c4c8b0] bg-[linear-gradient(90deg,#8a8870_0%,#8f8f70_32%,#e0988c_34%,#c8a078_37%,#d8806c_39%,#b890a0_42%,#d4a848_44%,#e0b0a8_46%,#6c4c38_48%,#d0c0a0_50%,#503c28_51%,#b8a07c_55%,#d0a898_58%,#8c6c48_60%,#c89878_63%,#84805c_66%,#8c8864_78%,#a88850_80%,#7c7858_82%,#86825f_100%)]"></div>
      </div>
      <Taskbar />
    </div>
  )
}

export default App
